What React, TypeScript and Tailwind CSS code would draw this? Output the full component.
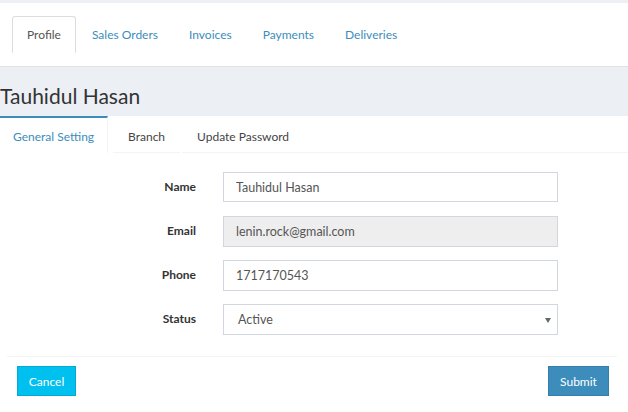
import { useState } from "react";

const mainTabs = ["Profile", "Sales Orders", "Invoices", "Payments", "Deliveries"];
const subTabs = [
  { label: "General Setting", cls: "px-[13px]" },
  { label: "Branch", cls: "ml-[5px] px-[15px]" },
  { label: "Update Password", cls: "ml-[2px] px-[15px]" },
];

function Field({ label, children }: { label: string; children: React.ReactNode }) {
  return (
    <div className="flex items-center h-[30px]">
      <label className="w-[196px] text-right text-[12px] font-bold text-[#333]">{label}</label>
      <div className="ml-[27px] w-[335px]">{children}</div>
    </div>
  );
}

export default function App() {
  const [tab, setTab] = useState("Profile");
  const [sub, setSub] = useState("General Setting");
  const [name, setName] = useState("Tauhidul Hasan");
  const [phone, setPhone] = useState("1717170543");

  return (
    <div className="w-full h-[412px] overflow-hidden bg-white text-[#333] font-['Lato','Liberation_Sans',sans-serif]">
      <div className="h-[3px] bg-[#ecf0f5]" />

      {/* Top tabs */}
      <nav className="h-[64px] border-b border-[#dfe3e8] pt-[13px] pl-[12px]">
        <ul className="flex">
          {mainTabs.map((t) => (
            <li key={t} className="mr-[1px]">
              <button
                onClick={() => setTab(t)}
                className={`h-[37px] px-[14px] text-[12px] rounded-t-[3px] border ${
                  tab === t
                    ? "border-[#ddd] border-b-transparent text-[#555]"
                    : "border-transparent text-[#3c8dbc]"
                }`}
              >
                {t}
              </button>
            </li>
          ))}
        </ul>
      </nav>

      {/* Page header */}
      <div className="h-[49px] bg-[#ecf0f5] flex items-center">
        <h1 className="text-[21px] leading-none text-[#333] pt-[8px]">Tauhidul Hasan</h1>
      </div>

      {/* Sub tabs */}
      <div className="flex h-[37px]">
        {subTabs.map((t) => (
          <button
            key={t.label}
            onClick={() => setSub(t.label)}
            className={`text-[12px] ${t.cls} ${
              sub === t.label
                ? "border-t-2 border-t-[#3c8dbc] border-r border-r-[#f4f4f4] text-[#3c8dbc] pt-[3px]"
                : "border-b border-b-[#f4f4f4] text-[#444] pt-[5px]"
            }`}
          >
            {t.label}
          </button>
        ))}
        <div className="flex-1 border-b border-b-[#f4f4f4]" />
      </div>

      {/* Form */}
      <form className="pt-[19px] flex flex-col gap-[14px]">
        <Field label="Name">
          <input
            value={name}
            onChange={(e) => setName(e.target.value)}
            className="w-full h-[30px] border border-[#d2d6de] px-[12px] text-[12.5px] text-[#555] outline-none"
          />
        </Field>
        <Field label="Email">
          <input
            value="lenin.rock@gmail.com"
            disabled
            className="w-full h-[31px] border border-[#d2d6de] bg-[#eee] px-[12px] text-[12.5px] text-[#555]"
          />
        </Field>
        <Field label="Phone">
          <input
            value={phone}
            onChange={(e) => setPhone(e.target.value)}
            className="w-full h-[31px] border border-[#d2d6de] px-[12px] text-[12.5px] text-[#555] outline-none"
          />
        </Field>
        <Field label="Status">
          <div className="relative w-full h-[31px] border border-[#d2d6de] flex items-center pt-[2px] px-[14px] text-[12.5px] text-[#555]">
            Active
            <span className="absolute right-[6px] top-[13px] w-0 h-0 border-l-[3px] border-r-[3px] border-t-[5px] border-l-transparent border-r-transparent border-t-[#666]" />
          </div>
        </Field>
      </form>

      {/* Footer */}
      <div className="mt-[22px] ml-[7px] mr-[11px] border-t border-[#f4f4f4] pt-[9px] flex justify-between pl-[10px] pr-[8px]">
        <button className="h-[30px] w-[59px] pt-[1px] bg-[#00c0ef] border border-[#00acd6] text-white text-[12px]">
          Cancel
        </button>
        <button className="h-[30px] w-[61px] pt-[1px] bg-[#3c8dbc] border border-[#367fa9] text-white text-[12px]">
          Submit
        </button>
      </div>
    </div>
  );
}
